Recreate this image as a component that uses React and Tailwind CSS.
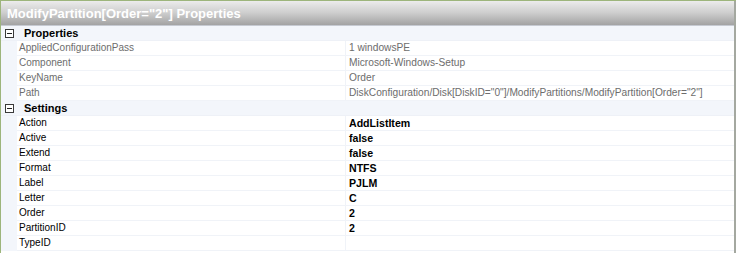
export default function App() {
  const props = [
    ["AppliedConfigurationPass", "1 windowsPE"],
    ["Component", "Microsoft-Windows-Setup"],
    ["KeyName", "Order"],
    ["Path", 'DiskConfiguration/Disk[DiskID="0"]/ModifyPartitions/ModifyPartition[Order="2"]'],
  ]
  const settings = [
    ["Action", "AddListItem"],
    ["Active", "false"],
    ["Extend", "false"],
    ["Format", "NTFS"],
    ["Label", "PJLM"],
    ["Letter", "C"],
    ["Order", "2"],
    ["PartitionID", "2"],
    ["TypeID", ""],
  ]

  const Category = ({ title }) => (
    <div className="flex h-[15px] shrink-0 items-center bg-[#f3f6fb] border-b border-[#eef1f7]">
      <div className="w-[16px] flex items-center justify-center">
        <div className="w-[9px] h-[9px] border border-[#3a3a3a] bg-white flex items-center justify-center">
          <div className="w-[5px] h-px bg-[#222]" />
        </div>
      </div>
      <span className="ml-[7px] text-[11px] font-bold text-black leading-none">{title}</span>
    </div>
  )

  const Row = ({ name, value, readOnly }) => (
    <div className="flex h-[15px] shrink-0 items-center">
      <div className="w-[16px] h-full bg-[#f3f6fb]" />
      <div className="flex h-full flex-1 border-b border-[#f0f3f8] bg-white">
        <div className={`w-[329px] pl-[2px] h-full flex items-center border-r border-[#f0f3f8] text-[10px] ${readOnly ? "text-[#6d6d6d]" : "text-black"}`}>
          {name}
        </div>
        <div className={`pl-[3px] h-full flex items-center ${readOnly ? "text-[#6d6d6d] text-[10.2px]" : "text-black font-bold text-[10.6px]"}`}>
          {value}
        </div>
      </div>
    </div>
  )

  return (
    <div
      className="w-[736px] h-[253px] bg-white border-t border-l border-[#9db57c] overflow-hidden leading-none"
      style={{ fontFamily: '"Liberation Sans", Arial, sans-serif' }}
    >
      <div className="h-[253px] border-r-2 border-r-[#a4a8a0] flex flex-col">
        <div className="h-[24px] shrink-0 flex items-center pl-[6px] bg-gradient-to-b from-[#ececec] via-[#cdcdcd] to-[#a3a3a3]">
          <span className="text-white font-bold text-[13px]">ModifyPartition[Order="2"] Properties</span>
        </div>
        <div className="h-px shrink-0 bg-[#c6cad2]" />
        <Category title="Properties" />
        {props.map(([n, v]) => (
          <Row key={n} name={n} value={v} readOnly />
        ))}
        <Category title="Settings" />
        {settings.map(([n, v]) => (
          <Row key={n} name={n} value={v} />
        ))}
      </div>
    </div>
  )
}
